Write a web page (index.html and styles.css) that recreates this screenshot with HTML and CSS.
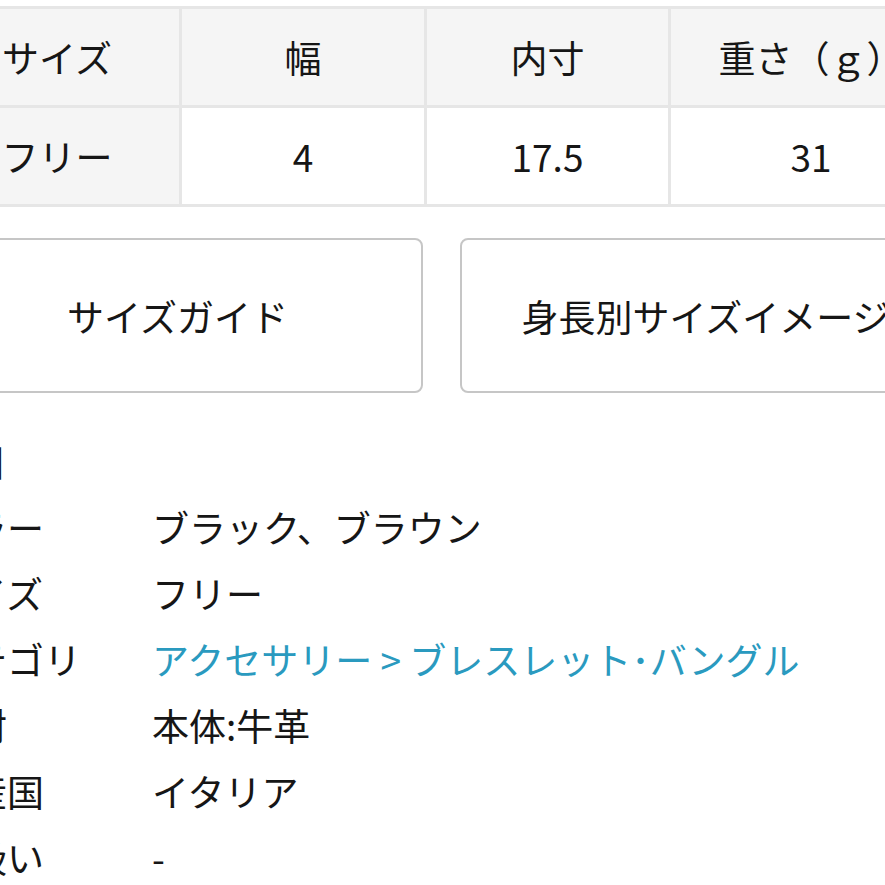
FILE: index.html
```html
<!DOCTYPE html>
<html lang="ja">
<head>
<meta charset="utf-8">
<link rel="stylesheet" href="styles.css">
</head>
<body>
<div class="page">
  <table class="size-table">
    <colgroup>
      <col class="c1"><col class="c2"><col class="c3"><col class="c4">
    </colgroup>
    <thead>
      <tr><th>サイズ</th><th>幅</th><th>内寸</th><th>重さ（ｇ）</th></tr>
    </thead>
    <tbody>
      <tr><th>フリー</th><td>4</td><td>17.5</td><td>31</td></tr>
    </tbody>
  </table>
  <div class="buttons">
    <button class="btn">サイズガイド</button>
    <button class="btn">身長別サイズイメージ</button>
  </div>
  <dl class="spec">
    <div class="row"><dt>品目</dt><dd></dd></div>
    <div class="row"><dt>カラー</dt><dd>ブラック、ブラウン</dd></div>
    <div class="row"><dt>サイズ</dt><dd>フリー</dd></div>
    <div class="row"><dt>カテゴリ</dt><dd><a class="link" href="#">アクセサリー &gt; ブレスレット･バングル</a></dd></div>
    <div class="row"><dt>素材</dt><dd>本体:牛革</dd></div>
    <div class="row"><dt>原産国</dt><dd>イタリア</dd></div>
    <div class="row"><dt>取扱い</dt><dd>-</dd></div>
  </dl>
</div>
</body>
</html>
```
FILE: styles.css
```css
html, body {
  margin: 0;
  padding: 0;
  background: #fff;
  overflow: hidden;
}
body {
  font-family: "Noto Sans CJK JP", "Noto Sans", sans-serif;
  color: #161616;
  font-size: 37px;
}
.page {
  margin-left: -68px;
  width: 1019px;
  padding-top: 6px;
}
.size-table {
  width: 100%;
  border-collapse: collapse;
  table-layout: fixed;
}
.c1 { width: 247px; }
.c2 { width: 245px; }
.c3 { width: 244px; }
.c4 { width: 283px; }
.size-table th,
.size-table td {
  border: 3px solid #e6e6e6;
  height: 96px;
  padding: 0;
  text-align: center;
  font-weight: 400;
  line-height: 1;
  white-space: nowrap;
}
.size-table th { background: #f5f5f5; }
.size-table td { background: #fff; }
.buttons {
  display: flex;
  gap: 37px;
  margin-top: 31px;
}
.btn {
  flex: 1;
  height: 155px;
  background: #fff;
  border: 2px solid #c6c6c6;
  border-radius: 8px;
  font-family: inherit;
  font-size: 37px;
  color: #161616;
  padding: 0;
  white-space: nowrap;
  overflow: hidden;
}
.spec {
  margin: 35px 0 0;
}
.row {
  display: flex;
  height: 66px;
  align-items: center;
}
.spec dt {
  width: 219px;
  padding-left: 1px;
  flex: none;
}
.spec dd {
  margin: 0;
  white-space: nowrap;
}
.link {
  color: #2a9abf;
  text-decoration: none;
}
```
